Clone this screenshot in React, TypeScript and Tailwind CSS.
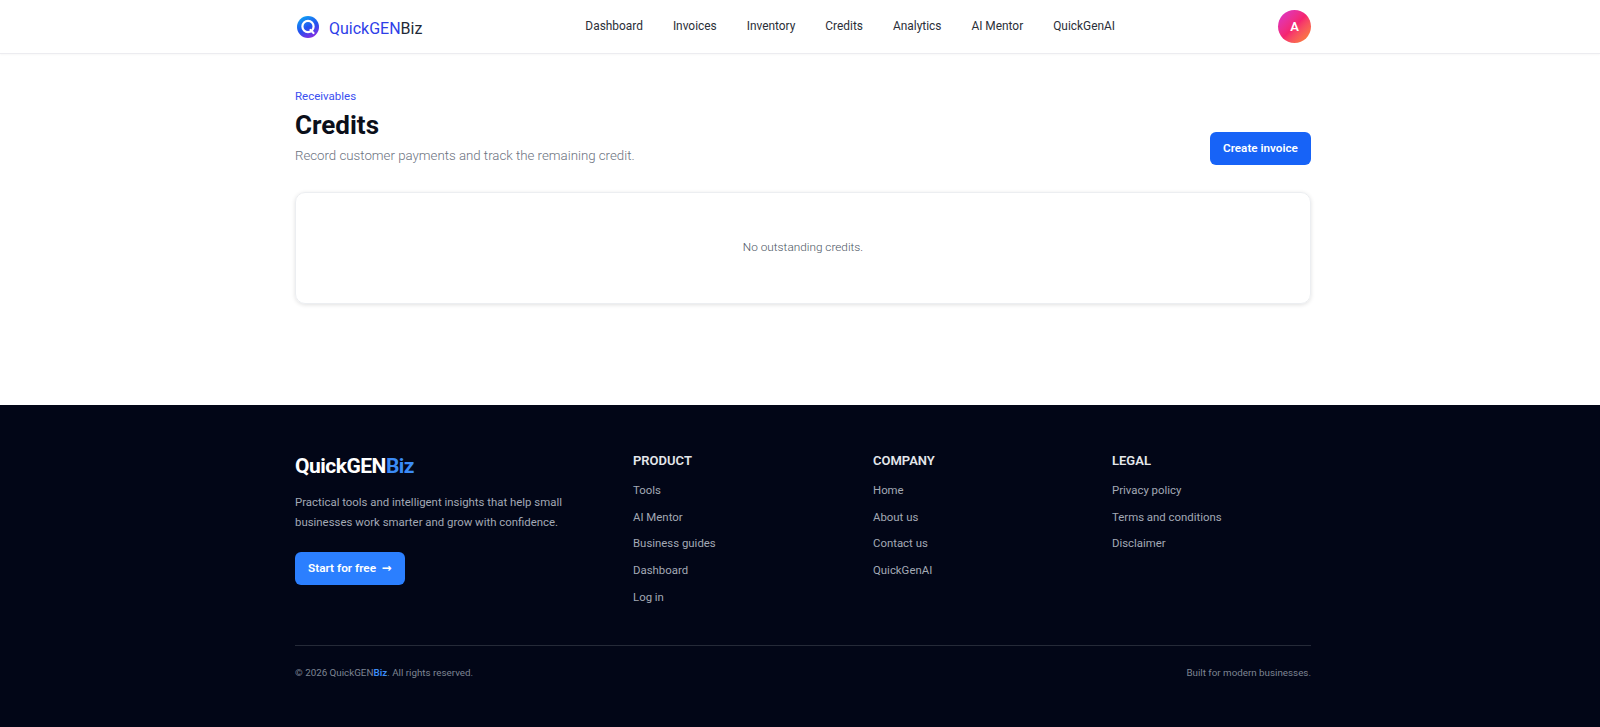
import React from "react";

const nav = ["Dashboard", "Invoices", "Inventory", "Credits", "Analytics", "AI Mentor", "QuickGenAI"];
const cols = [
  { t: "PRODUCT", w: "w-[240px]", l: ["Tools", "AI Mentor", "Business guides", "Dashboard", "Log in"] },
  { t: "COMPANY", w: "w-[239px]", l: ["Home", "About us", "Contact us", "QuickGenAI"] },
  { t: "LEGAL", w: "w-[199px]", l: ["Privacy policy", "Terms and conditions", "Disclaimer"] },
];

function Logo() {
  return (
    <svg width="22" height="22" viewBox="0 0 22 22" className="shrink-0">
      <defs>
        <linearGradient id="lg" x1="0.2" y1="0" x2="0.7" y2="1">
          <stop offset="0" stopColor="#0ea5f5" />
          <stop offset="0.55" stopColor="#2450ee" />
          <stop offset="1" stopColor="#8a2be2" />
        </linearGradient>
      </defs>
      <circle cx="11" cy="11" r="11" fill="url(#lg)" />
      <circle cx="11" cy="10.5" r="5.6" fill="none" stroke="#fff" strokeWidth="2.2" />
      <path d="M13.5 14l3 3" stroke="#fff" strokeWidth="2.2" strokeLinecap="round" />
      <path d="M8.5 12.5l2-2 1.2 1 1.6-2" stroke="#2450ee" strokeWidth="1.1" fill="none" />
    </svg>
  );
}

export default function App() {
  return (
    <div className="min-h-[727px] bg-white flex flex-col font-['Roboto',sans-serif]">
      <header className="h-[54px] border-b border-[#ececf0] bg-white shadow-[0_1px_2px_rgba(0,0,0,0.03)]">
        <div className="w-[1016px] ml-[295px] h-full flex items-center justify-between">
          <div className="flex items-center gap-[10px] pl-[2px]">
            <Logo />
            <span className="text-[16px] leading-[24px] mt-[4px] text-[#1f2937]"><span className="text-[#2f3fe8]">QuickGEN</span>Biz</span>
          </div>
          <nav className="flex items-center gap-[30px] mt-[1px] text-[11.9px] text-[#2b2f38]">
            {nav.map((n) => <span key={n}>{n}</span>)}
          </nav>
          <div className="w-[33px] h-[33px] rounded-full bg-gradient-to-br from-[#d92fd0] via-[#f5246f] to-[#fb8a14] text-white text-[13px] font-semibold flex items-center justify-center">A</div>
        </div>
      </header>

      <main className="w-[1016px] ml-[295px] h-[351px] pt-[33px]">
        <div className="flex items-end justify-between">
          <div>
            <div className="text-[11.5px] leading-[18px] text-[#3b4ff0]">Receivables</div>
            <h1 className="text-[26px] leading-[36px] font-bold text-[#0b0f1a] mt-[2px]">Credits</h1>
            <p className="text-[13.25px] leading-[22px] font-light text-[#6b7280] mt-[2px]">Record customer payments and track the remaining credit.</p>
          </div>
          <button className="h-[33px] w-[101px] mb-[2px] rounded-[6px] bg-[#1763f7] text-white text-[11.7px] font-semibold">Create invoice</button>
        </div>
        <div className="mt-[25px] h-[112px] rounded-[10px] border border-[#eceef1] shadow-[0_1px_4px_rgba(0,0,0,0.12)] flex items-center justify-center text-[11.8px] font-light text-[#4b5563]">
          No outstanding credits.
        </div>
      </main>

      <footer className="flex-1 bg-[#020617]">
        <div className="w-[1016px] ml-[295px] pt-[47px]">
          <div className="flex h-[193px]">
            <div className="w-[338px]">
              <div className="text-[21px] leading-[28px] font-bold text-white tracking-[-0.5px]">QuickGEN<span className="text-[#3b8bf6]">Biz</span></div>
              <p className="mt-[12px] text-[11.4px] leading-[20px] text-[#a3a9b5]">Practical tools and intelligent insights that help small<br />businesses work smarter and grow with confidence.</p>
              <button className="mt-[20px] h-[33px] w-[110px] justify-center rounded-[6px] bg-[#2b7fff] text-white text-[11.8px] font-semibold flex items-center gap-[6px]">Start for free <span className="font-['DejaVu_Sans',sans-serif]">→</span></button>
            </div>
            {cols.map((c) => (
              <div key={c.t} className={c.w}>
                <div className="text-[13px] leading-[18px] font-semibold text-[#e5e7eb]">{c.t}</div>
                <ul className="mt-[11px] flex flex-col gap-[8px] text-[11.4px] leading-[18.7px] text-[#a3a9b5]">
                  {c.l.map((i) => <li key={i}>{i}</li>)}
                </ul>
              </div>
            ))}
          </div>
          <div className="border-t border-[#252a38] pt-[19px] flex justify-between text-[9.8px] leading-[16px] text-[#7d8492]">
            <span>© 2026 QuickGEN<span className="text-[#3b8bf6] font-semibold">Biz</span>. All rights reserved.</span>
            <span>Built for modern businesses.</span>
          </div>
        </div>
      </footer>
    </div>
  );
}
